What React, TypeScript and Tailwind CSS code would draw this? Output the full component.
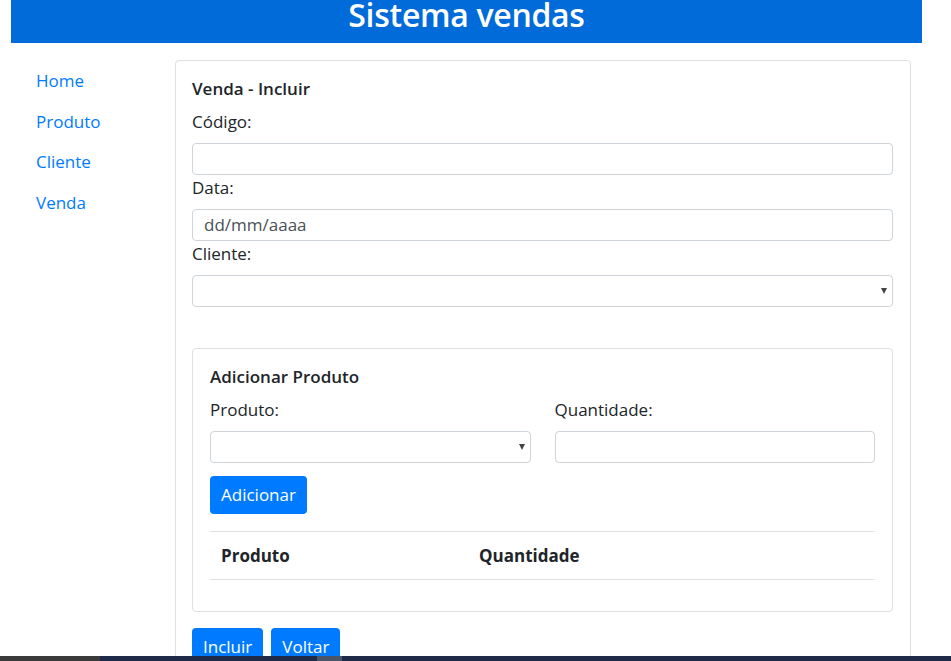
import React from 'react'

const font = "font-['Open_Sans',sans-serif]"

function Field({ label, placeholder, select }: { label: string; placeholder?: string; select?: boolean }) {
  return (
    <div className="flex flex-col">
      <label className="text-[17px] leading-[24px] text-[#212529] mb-[9px]">{label}</label>
      <div className="relative h-[32px] border border-[#ced4da] rounded-[4px] bg-white flex items-center px-[11px] text-[17px] text-[#495057]">
        {placeholder}
        {select && (
          <span className="absolute right-[5px] top-[12px] w-0 h-0 border-l-[3px] border-r-[3px] border-t-[6px] border-l-transparent border-r-transparent border-t-[#444]" />
        )}
      </div>
    </div>
  )
}

function Button({ children }: { children: React.ReactNode }) {
  return (
    <button className="h-[38px] px-[11px] bg-[#007bff] text-white text-[17px] rounded-[4px] leading-[38px]">
      {children}
    </button>
  )
}

export default function App() {
  return (
    <div className={`relative w-[951px] h-[661px] overflow-hidden bg-white ${font}`}>
      <div className="ml-[11px] w-[911px] h-[43px] bg-[#006bd9] flex items-start justify-center overflow-hidden">
        <h1 className="text-white text-[32px] font-semibold leading-[30px] tracking-[-0.3px]">Sistema vendas</h1>
      </div>

      <div className="flex mt-[17px]">
        <nav className="w-[175px] flex flex-col pl-[36px] pt-[1px]">
          {['Home', 'Produto', 'Cliente', 'Venda'].map((l) => (
            <a key={l} href="#" className="text-[#007bff] text-[17px] leading-[24px] py-[8px] h-[40.5px]">
              {l}
            </a>
          ))}
        </nav>

        <div className="w-[736px] h-[700px] border border-[#dfdfdf] rounded-[4px] pl-[16px] pr-[17px] pt-[16px]">
          <h5 className="text-[17px] font-semibold text-[#212529] leading-[24px] mb-[9px]">Venda - Incluir</h5>
          <div className="flex flex-col gap-[1px]">
            <Field label="Código:" />
            <Field label="Data:" placeholder="dd/mm/aaaa" />
            <Field label="Cliente:" select />
          </div>

          <div className="mt-[41px] border border-[#dfdfdf] rounded-[4px] pl-[17px] pr-[17px] pt-[16px] h-[264px]">
            <h5 className="text-[17px] font-semibold text-[#212529] leading-[24px] mb-[9px]">Adicionar Produto</h5>
            <div className="grid grid-cols-2 gap-[24px]">
              <Field label="Produto:" select />
              <Field label="Quantidade:" />
            </div>
            <div className="mt-[13px]">
              <Button>Adicionar</Button>
            </div>
            <div className="mt-[17px] border-t border-b border-[#dee2e6] h-[49px] flex items-center font-bold text-[17px] text-[#212529]">
              <div className="w-[257px] pl-[11px]">Produto</div>
              <div className="pl-[12px]">Quantidade</div>
            </div>
          </div>

          <div className="mt-[16px] flex gap-[8px]">
            <Button>Incluir</Button>
            <Button>Voltar</Button>
          </div>
        </div>
      </div>

      <div className="absolute left-0 bottom-0 w-full h-[5px] flex">
        <div className="w-[100px] bg-[#3a3a3a]" />
        <div className="w-[217px] bg-[#1f2a48]" />
        <div className="w-[25px] bg-[#4b5569]" />
        <div className="flex-1 bg-[#1f2a48]" />
      </div>
    </div>
  )
}
